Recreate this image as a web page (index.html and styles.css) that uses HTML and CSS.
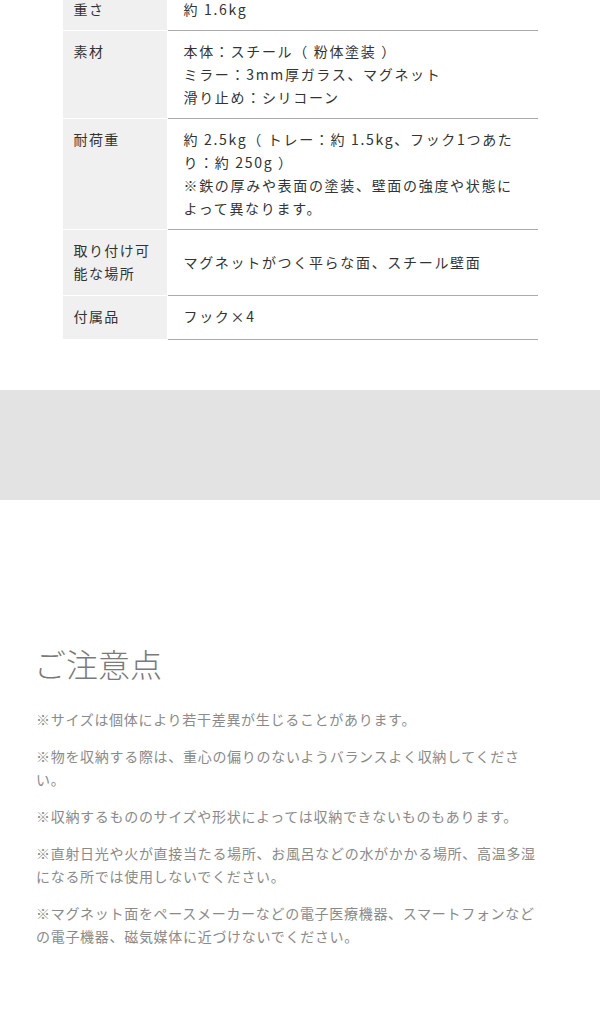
FILE: index.html
```html
<!DOCTYPE html>
<html lang="ja">
<head>
<meta charset="utf-8">
	<title>商品仕様 - ご注意点</title>
	<link rel="stylesheet" href="styles.css">
</head>
<body>
	<div class="spec">
		<table class="specTable">
			<tr>
				<th>重さ</th>
				<td>約 1.6kg</td>
			</tr>
			<tr>
				<th>素材</th>
				<td>本体：スチール（ 粉体塗装 ）<br>ミラー：3mm厚ガラス、マグネット<br>滑り止め：シリコーン</td>
			</tr>
			<tr>
				<th>耐荷重</th>
				<td>約 2.5kg（ トレー：約 1.5kg、フック1つあたり：約 250g ）<br>※鉄の厚みや表面の塗装、壁面の強度や状態によって異なります。</td>
			</tr>
			<tr class="middle">
				<th>取り付け可能な場所</th>
				<td>マグネットがつく平らな面、スチール壁面</td>
			</tr>
			<tr class="last">
				<th>付属品</th>
				<td>フック×4</td>
			</tr>
		</table>
	</div>

	<div class="band"></div>

	<div class="notice">
		<h2 class="noticeTitle">ご注意点</h2>
		<p>※サイズは個体により若干差異が生じることがあります。</p>
		<p>※物を収納する際は、重心の偏りのないようバランスよく収納してください。</p>
		<p>※収納するもののサイズや形状によっては収納できないものもあります。</p>
		<p>※直射日光や火が直接当たる場所、お風呂などの水がかかる場所、高温多湿になる所では使用しないでください。</p>
		<p>※マグネット面をペースメーカーなどの電子医療機器、スマートフォンなどの電子機器、磁気媒体に近づけないでください。</p>
	</div>
</body>
</html>
```

FILE: styles.css
```css
body{
	margin: 0px;
	padding: 0px;
	background-color: #FFFFFF;
	font-family: "Noto Sans CJK JP", "Noto Sans", sans-serif;
}
.spec{
	margin-top: -11px;
}
.specTable{
	width: 475px;
	margin: 0px auto;
	border-collapse: collapse;
	font-size: 14px;
	line-height: 23px;
	color: #333333;
}
.specTable th{
	width: 83px;
	background-color: #F0F0F0;
	border-bottom: 1px solid #FFFFFF;
	border-right: 1px solid #FFFFFF;
	padding: 9px 10px 9px 11px;
	text-align: left;
	vertical-align: top;
	font-weight: normal;
	letter-spacing: 0.1em;
}
.specTable td{
	border-bottom: 1px solid #AAAAAA;
	padding: 9px 14px 9px 16px;
	vertical-align: top;
	letter-spacing: 0.12em;
}
.specTable .middle th,
.specTable .middle td{
	padding-bottom: 10px;
}
.specTable .middle td{
	vertical-align: middle;
}
.specTable .last th,
.specTable .last td{
	padding-bottom: 11px;
}
.band{
	margin-top: 50px;
	height: 110px;
	background-color: #E3E3E3;
}
.notice{
	width: 510px;
	padding: 139px 0px 60px 36px;
}
.noticeTitle{
	margin: 0px 0px 21px -2px;
	font-size: 32px;
	line-height: 48px;
	font-weight: 300;
	color: #7A7A7A;
}
.notice p{
	margin: 0px 0px 14px 0px;
	font-size: 14px;
	line-height: 23px;
	letter-spacing: 0.05em;
	color: #8A8A8A;
}
```
